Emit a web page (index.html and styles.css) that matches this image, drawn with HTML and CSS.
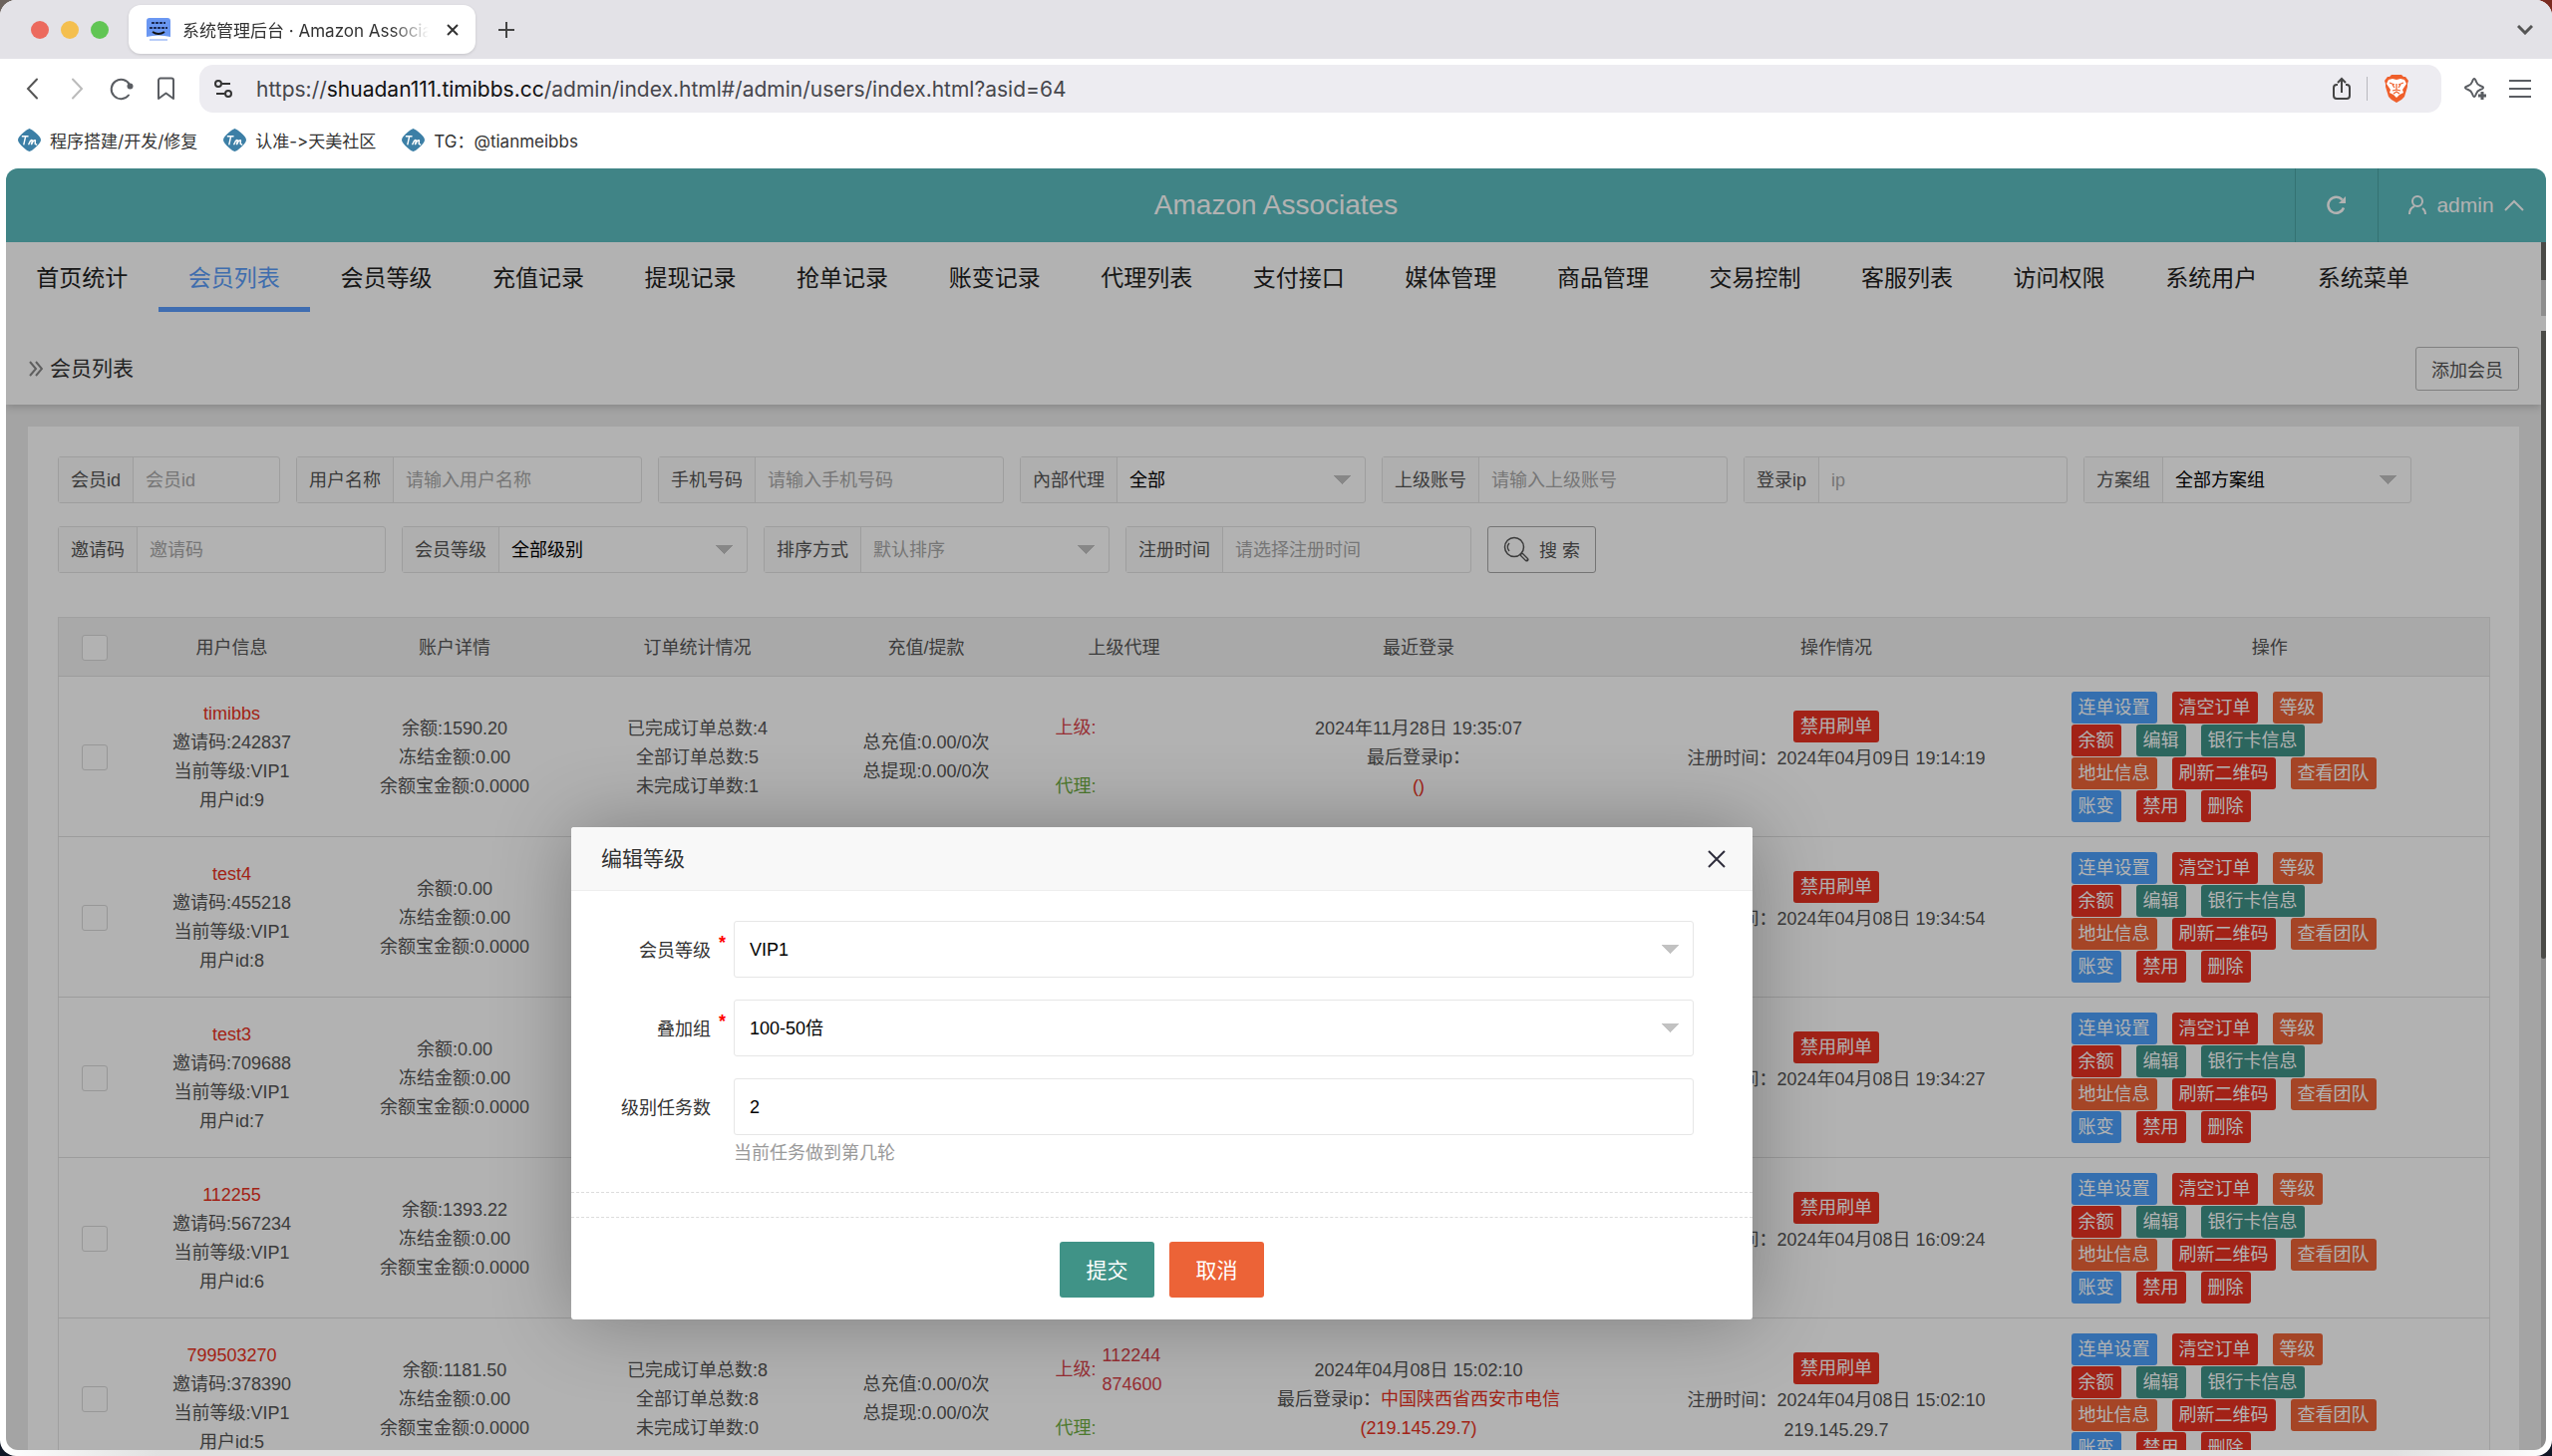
FILE: index.html
```html
<!DOCTYPE html>
<html lang="zh-CN">
<head>
<meta charset="utf-8">
<title>系统管理后台 · Amazon Associates</title>
<link rel="stylesheet" href="styles.css">
</head>
<body>
<div class="window">
  <header class="tabstrip">
    <span class="light light-red"></span><span class="light light-yellow"></span><span class="light light-green"></span>
    <div class="tab">
      <svg class="favicon" viewBox="0 0 24 24"><path d="M3 0h18a3 3 0 0 1 3 3v16q-12-3-24 0V3a3 3 0 0 1 3-3z" fill="#6a97f2"/><path d="M5 5h14M3 10h18" stroke="#1d2b55" stroke-width="2" stroke-dasharray="3 1"/><path d="M6 14q6 4 12 0" stroke="#111" stroke-width="2" fill="none"/><path d="M3 22h18" stroke="#b9cdf8" stroke-width="2"/></svg>
      <span class="tab-title">系统管理后台 · Amazon Associates</span>
      <button class="icon-btn tab-close" aria-label="关闭标签页"><svg width="12" height="12" viewBox="0 0 12 12"><path d="M1 1l10 10M11 1L1 11" stroke="#333" stroke-width="2"/></svg></button>
    </div>
    <button class="icon-btn new-tab" aria-label="新标签页"><svg width="16" height="16" viewBox="0 0 16 16"><path d="M8 0v16M0 8h16" stroke="#444" stroke-width="2"/></svg></button>
    <button class="icon-btn tab-menu" aria-label="标签列表"><svg width="16" height="10" viewBox="0 0 16 10"><path d="M1 1l7 7 7-7" stroke="#555" stroke-width="3" fill="none"/></svg></button>
  </header>
  <div class="toolbar">
    <div class="nav-buttons">
      <button class="icon-btn" aria-label="后退"><svg width="24" height="24" viewBox="0 0 24 24"><path d="M17 2.500L8 12l9 9.500" stroke="#555" stroke-width="2" stroke-linecap="round" fill="none"/></svg></button>
      <button class="icon-btn" aria-label="前进"><svg width="24" height="24" viewBox="0 0 24 24"><path d="M8 2.500l9 9.500-9 9.500" stroke="#bbb" stroke-width="2" stroke-linecap="round" fill="none"/></svg></button>
      <button class="icon-btn" aria-label="刷新"><svg width="24" height="24" viewBox="0 0 24 24"><path d="M19 18.500A9.700 9.700 0 1 1 20 8" stroke="#5a5d62" stroke-width="2" stroke-linecap="round" fill="none"/><circle cx="20.500" cy="9.500" r="3" fill="#5a5d62"/></svg></button>
      <button class="icon-btn" aria-label="书签"><svg width="24" height="24" viewBox="0 0 24 24"><path d="M4 3.500a2 2 0 0 1 2-2h11a2 2 0 0 1 2 2V22l-7.500-5.500L4 22z" stroke="#5a5d62" stroke-width="2" fill="none" stroke-linejoin="round"/></svg></button>
    </div>
    <div class="address">
      <svg width="20" height="20" viewBox="0 0 20 20" fill="none" stroke="#333" stroke-width="2"><circle cx="5" cy="5" r="3"/><path d="M9 5h8M3 15h8"/><circle cx="15" cy="15" r="3"/></svg>
      <span class="url">https://<b>shuadan111.timibbs.cc</b>/admin/index.html#/admin/users/index.html?asid=64</span>
      <svg width="20" height="24" viewBox="0 0 20 24" fill="none" stroke="#444" stroke-width="2"><path d="M6 8H5a3 3 0 0 0-3 3v8a3 3 0 0 0 3 3h10a3 3 0 0 0 3-3v-8a3 3 0 0 0-3-3h-1M10 16V2M6 6l4-4 4 4"/></svg>
      <span class="address-rule"></span>
      <svg width="24" height="28" viewBox="0 0 24 28"><path d="M5 2l2-2h10l2 2h2l3 4-1 3v3l-3 10-3 3-5 3-5-3-3-3L1 12V9L0 6l3-4z" fill="#ef5f2b"/><path d="M4 5l4-1 4 1 4-1 4 1 2 4-4 6 1 3-4 2-3 3-3-3-4-2 1-3-4-6z" fill="#fff"/><path d="M5 8l5 2M19 8l-5 2M12 9v6M8 10l2 3M16 10l-2 3M8 16l4-1 4 1M9 19l3-2 3 2" stroke="#ef5f2b" stroke-width="1.200" fill="none"/></svg>
    </div>
    <svg width="24" height="24" viewBox="0 0 24 24"><path d="M11 2q1 0 2 3 1 3 4 4t3 2-3 2q-3 1-4 4t-2 3-2-3-4-4q-3-1-3-2t3-2q3-1 4-4t2-3z" fill="none" stroke="#5a5d62" stroke-width="2"/><path d="M19 15v8M15 19h8" stroke="#5a5d62" stroke-width="3"/></svg>
    <svg width="22" height="18" viewBox="0 0 22 18"><path d="M0 1h22M0 9h22M0 17h22" stroke="#5a5d62" stroke-width="2"/></svg>
  </div>
  <nav class="bookmarks">
    <a href="#"><svg class="bm-icon" viewBox="0 0 24 24"><path d="M12 0q3 1 6 4 6 5 6 8t-6 8q-3 3-6 4-3-1-6-4-6-5-6-8t6-8q3-3 6-4z" fill="#3c7fa6"/><path d="M4 8h7M8 8l-2 9M11 17l2-4q2-2 2 0l-1 4 2-4q3-2 2 1v2l2 1" stroke="#fff" stroke-width="1.500" fill="none"/></svg>程序搭建/开发/修复</a>
    <a href="#"><svg class="bm-icon" viewBox="0 0 24 24"><path d="M12 0q3 1 6 4 6 5 6 8t-6 8q-3 3-6 4-3-1-6-4-6-5-6-8t6-8q3-3 6-4z" fill="#3c7fa6"/><path d="M4 8h7M8 8l-2 9M11 17l2-4q2-2 2 0l-1 4 2-4q3-2 2 1v2l2 1" stroke="#fff" stroke-width="1.500" fill="none"/></svg>认准-&gt;天美社区</a>
    <a href="#"><svg class="bm-icon" viewBox="0 0 24 24"><path d="M12 0q3 1 6 4 6 5 6 8t-6 8q-3 3-6 4-3-1-6-4-6-5-6-8t6-8q3-3 6-4z" fill="#3c7fa6"/><path d="M4 8h7M8 8l-2 9M11 17l2-4q2-2 2 0l-1 4 2-4q3-2 2 1v2l2 1" stroke="#fff" stroke-width="1.500" fill="none"/></svg>TG：@tianmeibbs</a>
  </nav>

  <div class="viewport">
    <header class="app-header">
      <h1>Amazon Associates</h1>
      <button class="head-cell head-refresh" aria-label="刷新"><svg width="20" height="20" viewBox="0 0 20 20"><path d="M17 12.500A8 8 0 1 1 15.500 4.500" stroke="#fff" stroke-width="2.500" fill="none"/><path d="M19 1v7h-7z" fill="#fff"/></svg></button>
      <button class="head-cell head-user"><svg width="18" height="20" viewBox="0 0 18 20" fill="none" stroke="#fff" stroke-width="2"><circle cx="9" cy="6" r="5"/><path d="M1 19q0-6 5-8M14 13q3 2 3 6"/></svg>admin<svg width="20" height="12" viewBox="0 0 20 12"><path d="M1 11l9-9 9 9" stroke="#fff" stroke-width="2" fill="none"/></svg></button>
    </header>
    <div class="menu-row">
      <nav class="menu">
        <a href="#">首页统计</a><a href="#" class="active">会员列表</a><a href="#">会员等级</a><a href="#">充值记录</a><a href="#">提现记录</a><a href="#">抢单记录</a><a href="#">账变记录</a><a href="#">代理列表</a><a href="#">支付接口</a><a href="#">媒体管理</a><a href="#">商品管理</a><a href="#">交易控制</a><a href="#">客服列表</a><a href="#">访问权限</a><a href="#">系统用户</a><a href="#">系统菜单</a>
      </nav>
      <div class="track"><div class="thumb thumb-menu"></div></div>
    </div>
    <div class="frame">
      <main class="page">
        <div class="crumb">
          <svg width="14" height="16" viewBox="0 0 14 16"><path d="M1 1l6 7-6 7M7 1l6 7-6 7" stroke="#888" stroke-width="2" fill="none"/></svg>
          <h2>会员列表</h2>
          <button class="outline-btn">添加会员</button>
        </div>
        <section class="card">
          <form class="filters">
            <div class="field short"><label for="f-id">会员id</label><input id="f-id" placeholder="会员id"></div>
            <div class="field"><label for="f-name">用户名称</label><input id="f-name" placeholder="请输入用户名称"></div>
            <div class="field"><label for="f-tel">手机号码</label><input id="f-tel" placeholder="请输入手机号码"></div>
            <div class="field"><label for="f-agent">內部代理</label><select id="f-agent"><option>全部</option></select></div>
            <div class="field"><label for="f-parent">上级账号</label><input id="f-parent" placeholder="请输入上级账号"></div>
            <div class="field"><label for="f-ip">登录ip</label><input id="f-ip" placeholder="ip"></div>
            <div class="field"><label for="f-plan">方案组</label><select id="f-plan"><option>全部方案组</option></select></div>
            <div class="field"><label for="f-code">邀请码</label><input id="f-code" placeholder="邀请码"></div>
            <div class="field"><label for="f-level">会员等级</label><select id="f-level"><option>全部级别</option></select></div>
            <div class="field"><label for="f-sort">排序方式</label><select id="f-sort" class="muted"><option>默认排序</option></select></div>
            <div class="field"><label for="f-time">注册时间</label><input id="f-time" placeholder="请选择注册时间"></div>
            <button type="button" class="outline-btn search"><svg width="26" height="26" viewBox="0 0 26 26" fill="none" stroke="#555"><circle cx="11" cy="11" r="9.500" stroke-width="1.500"/><path d="M6 15a6 6 0 0 1 0-8" stroke-width="1.500"/><path d="M18.500 18.500l5 5" stroke-width="4" stroke-linecap="round"/><path d="M18.500 18.500l5 5" stroke="#fff" stroke-width="1.500"/></svg>搜 索</button>
          </form>
          <table class="grid">
            <colgroup><col class="c1"><col class="c2"><col class="c3"><col class="c4"><col class="c5"><col class="c6"><col class="c7"><col class="c8"><col class="c9"></colgroup>
            <thead><tr><th><input type="checkbox" aria-label="全选"></th><th>用户信息</th><th>账户详情</th><th>订单统计情况</th><th>充值/提款</th><th>上级代理</th><th>最近登录</th><th>操作情况</th><th>操作</th></tr></thead>
            <tbody id="rows"></tbody>
          </table>
        </section>
      </main>
      <div class="track"><div class="thumb thumb-page"></div></div>
    </div>
    <div class="shade"></div>
    <div class="dialog" role="dialog" aria-labelledby="dlg-title">
      <header class="dialog-head">
        <h2 id="dlg-title">编辑等级</h2>
        <button class="icon-btn" aria-label="关闭"><svg width="18" height="18" viewBox="0 0 18 18"><path d="M1 1l16 16M17 1L1 17" stroke="#2e2d3c" stroke-width="2"/></svg></button>
      </header>
      <form class="dialog-form">
        <div class="row"><label for="d-level" class="required">会员等级</label><select id="d-level"><option>VIP1</option></select></div>
        <div class="row"><label for="d-group" class="required">叠加组</label><select id="d-group"><option>100-50倍</option></select></div>
        <div class="row"><label for="d-count">级别任务数</label><input id="d-count" value="2"></div>
        <p class="hint">当前任务做到第几轮</p>
        <hr class="rule"><hr class="rule">
        <div class="actions"><button type="button" class="btn teal">提交</button><button type="button" class="btn orange">取消</button></div>
      </form>
    </div>
  </div>
</div>
<script src="rows.js"></script>
</body>
</html>
```
FILE: styles.css
```css
* { box-sizing: border-box; }
body {
  margin: 0;
  background: linear-gradient(90deg, #6b625c 50%, #7a2b20 50%) top / 100% 50% no-repeat, #101726;
  font-family: "Liberation Sans", "Noto Sans CJK SC", sans-serif;
  font-size: 18px;
  color: #333;
}
h1, h2, p { margin: 0; font-weight: 400; }
a { color: inherit; text-decoration: none; }
button, input, select { font: inherit; color: inherit; margin: 0; }
svg { flex: none; display: block; }
.icon-btn { border: 0; background: none; padding: 0; display: flex; align-items: center; justify-content: center; }

/* Browser chrome */
.window {
  height: 100vh;
  display: flex;
  flex-direction: column;
  background: linear-gradient(90deg, #fff, #e0e0e0 160px, #e0e0e0 calc(100% - 160px), #fff) bottom / 100% 6px no-repeat, #fff;
  border-radius: 16px;
  overflow: hidden;
}
.tabstrip, .toolbar, .bookmarks { font-family: Inter, "Noto Sans CJK SC", sans-serif; font-feature-settings: "calt" 0; }
.tabstrip { height: 59px; flex: none; display: flex; align-items: center; padding: 0 19px 0 31px; background: #e3e2e7; }
.light { width: 18px; height: 18px; border-radius: 50%; margin-right: 12px; }
.light-red { background: #ec6a5e; }
.light-yellow { background: #f4bf4f; }
.light-green { background: #61c554; }
.tab { width: 348px; height: 49px; margin-left: 8px; padding: 0 17px 0 18px; border-radius: 12px; background: #fff; display: flex; align-items: center; box-shadow: 0 1px 3px #0002; }
.favicon { width: 24px; height: 24px; }
.tab-title { flex: 1; margin: 0 18px 0 12px; font-size: 17px; white-space: nowrap; overflow: hidden; mask-image: linear-gradient(90deg, #000 85%, transparent); }
.new-tab { margin-left: 23px; }
.tab-menu { margin-left: auto; }
.toolbar { height: 60px; flex: none; display: flex; align-items: center; padding: 0 21px 0 20px; }
.nav-buttons { display: flex; gap: 21px; width: 180px; }
.address { flex: 1; height: 48px; border-radius: 14px; background: #edecf1; display: flex; align-items: center; padding: 0 33px 0 14px; margin-right: 22px; }
.toolbar > svg + svg { margin-left: 22px; }
.url { flex: 1; margin-left: 23px; font-size: 21px; color: #46464c; }
.url b { font-weight: 400; color: #111; }
.address-rule { width: 1px; height: 24px; margin: 0 17px 0 15px; background: #b8b8be; }
.bookmarks { height: 50px; flex: none; display: flex; gap: 26px; padding: 0 18px 8px; align-items: center; font-size: 17px; }
.bookmarks a { display: flex; align-items: center; gap: 9px; }
.bm-icon { width: 23px; height: 23px; }

/* Admin shell */
.viewport { flex: 1; min-height: 0; margin: 0 6px 6px; position: relative; display: flex; flex-direction: column; border-radius: 12px; overflow: hidden; background: #fff; }
.app-header { height: 74px; flex: none; display: grid; grid-template-columns: 252px 1fr 83px 169px; align-items: stretch; background: #5cbdc0; color: #fff; }
.app-header h1 { grid-column: 2; align-self: center; text-align: center; font-size: 28px; }
.head-cell { border: 0; border-left: 1px solid #4ba4a4; background: none; padding: 0; display: flex; align-items: center; justify-content: center; font-size: 21px; }
.head-user { gap: 10px; padding-left: 8px; }
.menu-row { height: 89px; flex: none; display: flex; align-items: flex-start; }
.menu { flex: 1; display: grid; grid-template-columns: repeat(16, 1fr); padding-right: 102px; font-size: 23px; text-align: center; color: #222; }
.menu a { height: 70px; line-height: 72px; border-bottom: 5px solid transparent; }
.menu .active { color: #5b9df8; border-color: #5b9dfe; }
.track { width: 5px; height: 100%; flex: none; background: #ccc; }
.menu-row .track { height: 74px; }
.thumb { background: #6a6a66; }
.thumb-menu { height: 38px; }
.thumb-page { height: 630px; border-radius: 0 0 3px 3px; }

.frame { flex: 1; min-height: 0; display: flex; }
.page { flex: 1; overflow: hidden; background: #ebebeb; }
.crumb { height: 74px; display: flex; align-items: center; padding: 2px 22px 0 23px; background: #fff; box-shadow: 0 2px 8px #0003; }
.crumb h2 { flex: 1; margin-left: 7px; padding-bottom: 4px; font-size: 21px; }
.outline-btn { height: 44px; padding: 0 15px; border: 1px solid #b9b9b9; border-radius: 3px; background: #fff; color: #555; }
.card { margin: 22px 22px 0; padding: 30px; background: #fff; }

/* Filters */
.filters { display: flex; flex-wrap: wrap; gap: 23px 16px; }
.field { display: flex; height: 47px; border: 1px solid #e2e2e2; border-radius: 3px; color: #555; }
.field label { padding: 0 12px; line-height: 46px; background: #fbfbfb; border-right: 1px solid #e2e2e2; white-space: nowrap; }
.field input, .field select { width: 248px; padding-top: 1px; }
.field.short input { width: 146px; }
input, select { border: 0; background-color: transparent; padding: 0 12px; outline: 0; }
input::placeholder { color: #aaa; opacity: 1; }
select {
  appearance: none;
  color: #000;
  background-image: conic-gradient(from -45deg at 50% 100%, #c2c2c2 90deg, transparent 0);
  background-size: 17px 9px;
  background-position: right 14px center;
  background-repeat: no-repeat;
}
select.muted { color: #aaa; }
.search { height: 47px; display: flex; align-items: center; gap: 10px; padding-bottom: 2px; border-color: #a8a8a8; }

/* Member table */
.grid { width: 100%; margin-top: 44px; table-layout: fixed; border-collapse: collapse; border: 1px solid #e6e6e6; color: #555; line-height: 29px; }
.grid th { height: 59px; padding: 2px 0 0; font-weight: 400; background: #f2f2f2; }
.grid td { height: 161px; padding: 2px 0 0; border-top: 1px solid #e0e0e0; text-align: center; }
.grid td:nth-child(n + 8) { padding-top: 0; }
.c1 { width: 72px; } .c2 { width: 204px; } .c3 { width: 243px; } .c4 { width: 244px; } .c5 { width: 215px; } .c6 { width: 182px; } .c7 { width: 409px; } .c8 { width: 429px; } .c9 { width: 441px; }
.grid input { appearance: none; display: block; width: 26px; height: 26px; padding: 0; margin: 0 auto; border: 1px solid #d8d8d8; border-radius: 3px; background: #fff; }
.red { color: #e93222; }
.rose { color: #d9434b; }
.green { color: #6fae42; }
.parents { display: grid; grid-template-columns: auto 1fr; grid-template-rows: 59px 59px; align-items: center; column-gap: 6px; padding-left: 22px; text-align: left; }
.parents a { display: block; }
.status { display: grid; justify-items: center; grid-template-rows: 33px 30px 30px; line-height: 30px; }
.ops { display: grid; gap: 1px; padding-left: 21px; }
.ops div { display: flex; gap: 15px; }
.tag { height: 32px; padding: 0 7px; border: 0; border-radius: 3px; color: #fff; line-height: 32px; }
.tag.b { background: #4ca0fb; } .tag.r { background: #e93222; } .tag.o { background: #ec6337; } .tag.g { background: #409387; }

/* Level dialog */
.shade { position: absolute; inset: 0; background: rgba(0, 0, 0, .3); }
.dialog { position: absolute; left: 567px; top: 661px; width: 1185px; background: #fff; border-radius: 3px; box-shadow: 1px 1px 80px rgba(0, 0, 0, .3); }
.dialog-head { height: 64px; display: flex; align-items: center; justify-content: space-between; padding: 0 27px 0 30px; background: #f8f8f8; border-bottom: 1px solid #eee; border-radius: 3px 3px 0 0; }
.dialog-head h2 { padding-bottom: 4px; font-size: 21px; }
.dialog-form { padding: 30px 0 22px; }
.row { display: flex; align-items: center; margin: 0 59px 22px 0; height: 57px; }
.row label { width: 163px; padding: 0 23px 2px 0; text-align: right; position: relative; }
.required::after { content: "*"; color: #f00; font-weight: 700; position: absolute; right: 8px; top: -3px; }
.row input, .row select { flex: 1; height: 57px; padding: 1px 15px 0; border: 1px solid #e6e6e6; border-radius: 3px; color: #000; }
.hint { margin: -19px 0 24px 163px; line-height: 30px; color: #999; }
.rule { margin: 0 0 24px; border: 0; border-top: 1px dashed #dcdcdc; }
.actions { display: flex; justify-content: center; gap: 15px; }
.btn { width: 95px; height: 56px; padding: 0 0 3px; border: 0; border-radius: 3px; color: #fff; font-size: 21px; }
.teal { background: #409387; }
.orange { background: #ec6337; }
```
FILE: rows.js
```js
const members = [
  { name: "timibbs", code: "242837", id: 9, bal: "1590.20", orders: [4, 5, 1], login: "2024年11月28日 19:35:07", ip: "()", reg: "2024年04月09日 19:14:19" },
  { name: "test4", code: "455218", id: 8, bal: "0.00", orders: [0, 0, 0], login: "", ip: "()", reg: "2024年04月08日 19:34:54" },
  { name: "test3", code: "709688", id: 7, bal: "0.00", orders: [0, 0, 0], login: "", ip: "()", reg: "2024年04月08日 19:34:27" },
  { name: "112255", code: "567234", id: 6, bal: "1393.22", orders: [0, 0, 0], login: "", ip: "()", reg: "2024年04月08日 16:09:24" },
  { name: "799503270", code: "378390", id: 5, bal: "1181.50", orders: [8, 8, 0], login: "2024年04月08日 15:02:10", place: "中国陕西省西安市电信", ip: "(219.145.29.7)", reg: "2024年04月08日 15:02:10", regIp: "219.145.29.7", parents: ["112244", "874600"] }
];
const ops = [
  [["b", "连单设置"], ["r", "清空订单"], ["o", "等级"]],
  [["r", "余额"], ["g", "编辑"], ["g", "银行卡信息"]],
  [["o", "地址信息"], ["r", "刷新二维码"], ["o", "查看团队"]],
  [["b", "账变"], ["r", "禁用"], ["r", "删除"]]
];
const opsHtml = ops.map(r => `<div>${r.map(([c, t]) => `<button class="tag ${c}">${t}</button>`).join("")}</div>`).join("");
document.getElementById("rows").innerHTML = members.map(m => `<tr>
<td><input type="checkbox" aria-label="${m.name}"></td>
<td><a href="#" class="red">${m.name}</a><br>邀请码:${m.code}<br>当前等级:VIP1<br>用户id:${m.id}</td>
<td>余额:${m.bal}<br>冻结金额:0.00<br>余额宝金额:0.0000</td>
<td>已完成订单总数:${m.orders[0]}<br>全部订单总数:${m.orders[1]}<br>未完成订单数:${m.orders[2]}</td>
<td>总充值:0.00/0次<br>总提现:0.00/0次</td>
<td><div class="parents"><span class="rose">上级:</span><span class="rose">${(m.parents || []).map(p => `<a href="#">${p}</a>`).join("")}</span><span class="green">代理:</span></div></td>
<td>${m.login}<br>最后登录ip：<span class="red">${m.place || ""}<br>${m.ip}</span></td>
<td><div class="status"><button class="tag r">禁用刷单</button><span>注册时间：${m.reg}</span><span>${m.regIp || ""}</span></div></td>
<td><div class="ops">${opsHtml}</div></td></tr>`).join("");
```
